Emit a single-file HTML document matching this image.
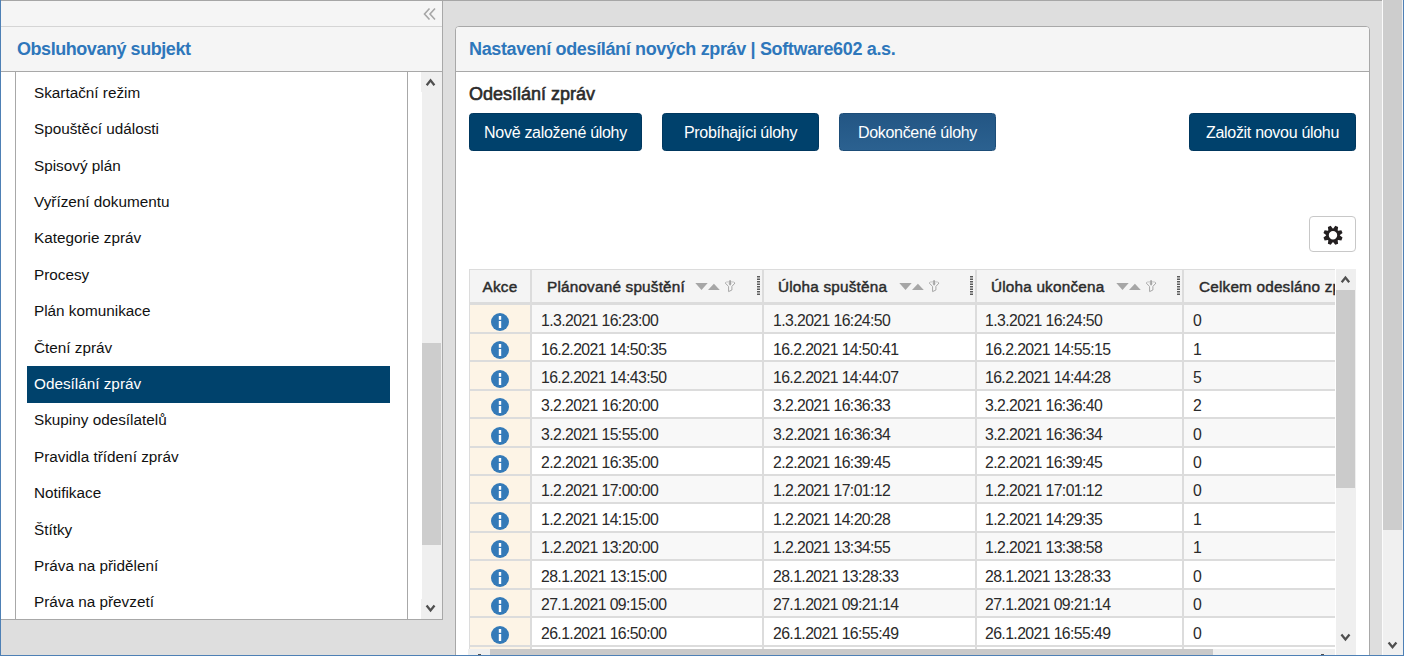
<!DOCTYPE html>
<html><head><meta charset="utf-8">
<style>
*{margin:0;padding:0;box-sizing:border-box}
html,body{width:1404px;height:656px;overflow:hidden;background:#dedede;font-family:"Liberation Sans",sans-serif;color:#222}
.a{position:absolute}
.t{position:absolute;white-space:nowrap}
/* frame */
#fl{left:0;top:0;width:1px;height:656px;background:#4e80b5}
#fr{left:1403px;top:0;width:1px;height:656px;background:#4e80b5}
#fb{left:0;top:655px;width:1404px;height:1px;background:#4e80b5}
#ftop{left:1px;top:0;width:1381px;height:1px;background:#a6a6a6}
/* page scrollbar */
#psw{left:1382px;top:0;width:1px;height:655px;background:#fbfbfb}
#pst{left:1383px;top:0;width:20px;height:655px;background:#f0f0f0}
#psth{left:1383px;top:0;width:19px;height:530px;background:#cdcdcd}
/* left panel */
#lp{left:1px;top:1px;width:442px;height:619px;background:#f5f5f5;border-right:1px solid #a8a8a8;border-bottom:1px solid #a8a8a8}
#lpl1{left:1px;top:26px;width:441px;height:1px;background:#d5d5d5}
#lpl2{left:1px;top:71px;width:441px;height:1px;background:#a8a8a8}
#lplist{left:1px;top:72px;width:441px;height:547px;background:#fff}
#lpb1{left:15px;top:72px;width:1px;height:547px;background:#a8a8a8}
#lpb2{left:407px;top:72px;width:1px;height:547px;background:#a8a8a8}
#lsb{left:422px;top:72px;width:20px;height:547px;background:#efefef}
#lsbth{left:422px;top:343px;width:19px;height:202px;background:#cdcdcd}
.li{position:absolute;left:27px;width:363px;height:36.4px;line-height:36.4px;font-size:15.3px;padding-left:7px;color:#111;white-space:nowrap}
.li.sel{background:#00426c;color:#fff;height:37px}
.h17{font-size:18px;font-weight:bold;color:#2e77bb;letter-spacing:-0.45px}
/* right panel */
#rp{left:455px;top:26px;width:915px;height:640px;background:#fff;border:1px solid #a8a8a8;border-radius:4px 4px 0 0}
#rph{left:456px;top:27px;width:913px;height:44px;background:#f5f5f5;border-radius:3px 3px 0 0}
#rpl{left:456px;top:71px;width:913px;height:1px;background:#a8a8a8}
.btn{position:absolute;top:113px;height:38px;border-radius:3.5px;background:#00416c;border:1px solid #00375e;color:#fff;font-size:16px;letter-spacing:-0.3px;line-height:37px;text-align:center;white-space:nowrap}
.btn.act{background:linear-gradient(#235684,#2b6190);border-color:#1d4d78}
.td{font-size:15.8px;letter-spacing:-0.6px;line-height:20px;color:#2a2a2a}
.th{font-size:15.3px;letter-spacing:0.2px;font-weight:normal;-webkit-text-stroke:0.45px #2b2b2b;line-height:20px;color:#2b2b2b}
</style></head><body>

<div class="a" id="psw"></div><div class="a" id="pst"></div><div class="a" id="psth"></div>
<svg class="a" style="left:1385px;top:639px" width="14" height="12" viewBox="0 0 14 12"><path d="M3.60 3.50 L7.50 8.30 L11.40 3.50" fill="none" stroke="#4f4f4f" stroke-width="2.3"/></svg>

<!-- LEFT PANEL -->
<div class="a" id="lp"></div>
<div class="a" id="lpl1"></div>
<div class="a" id="lpl2"></div>
<div class="a" id="lplist"></div>
<div class="a" id="lpb1"></div>
<div class="a" id="lpb2"></div>
<div class="a" id="lsb"></div>
<div class="a" id="lsbth"></div>
<div class="a" style="left:421px;top:72px;width:1px;height:20px;background:#efefef"></div><div class="a" style="left:421px;top:599px;width:1px;height:20px;background:#efefef"></div>
<svg class="a" style="left:423px;top:7px" width="14" height="14" viewBox="0 0 14 14"><path d="M6.5 1.5 L1.5 7 L6.5 12.5 M12 1.5 L7 7 L12 12.5" fill="none" stroke="#a6a6a6" stroke-width="1.6"/></svg>
<svg class="a" style="left:423px;top:76px" width="14" height="12" viewBox="0 0 14 12"><path d="M3.70 9.20 L7.55 4.40 L11.40 9.20" fill="none" stroke="#4f4f4f" stroke-width="2.3"/></svg>
<svg class="a" style="left:423px;top:602px" width="14" height="12" viewBox="0 0 14 12"><path d="M3.60 3.50 L7.55 8.50 L11.50 3.50" fill="none" stroke="#4f4f4f" stroke-width="2.3"/></svg>
<div class="t h17" style="left:17px;top:39px;line-height:20px">Obsluhovaný subjekt</div>
<div class="li" style="top:74.8px">Skartační režim</div>
<div class="li" style="top:111.2px">Spouštěcí události</div>
<div class="li" style="top:147.6px">Spisový plán</div>
<div class="li" style="top:184px">Vyřízení dokumentu</div>
<div class="li" style="top:220.4px">Kategorie zpráv</div>
<div class="li" style="top:256.8px">Procesy</div>
<div class="li" style="top:293.2px">Plán komunikace</div>
<div class="li" style="top:329.6px">Čtení zpráv</div>
<div class="li sel" style="top:366px">Odesílání zpráv</div>
<div class="li" style="top:402.4px">Skupiny odesílatelů</div>
<div class="li" style="top:438.8px">Pravidla třídení zpráv</div>
<div class="li" style="top:475.2px">Notifikace</div>
<div class="li" style="top:511.6px">Štítky</div>
<div class="li" style="top:548px">Práva na přidělení</div>
<div class="li" style="top:584.4px">Práva na převzetí</div>

<!-- RIGHT PANEL -->
<div class="a" id="rp"></div>
<div class="a" id="rph"></div>
<div class="a" id="rpl"></div>
<div class="t h17" style="left:469px;top:39px;line-height:20px;letter-spacing:-0.35px">Nastavení odesílání nových zpráv | Software602 a.s.</div>
<div class="t" style="left:469px;top:84px;line-height:20px;font-size:18px;letter-spacing:0px;font-weight:normal;-webkit-text-stroke:0.6px #2b2b2b;color:#2b2b2b">Odesílání zpráv</div>
<div class="btn" style="left:469px;width:173px">Nově založené úlohy</div>
<div class="btn" style="left:662px;width:157px">Probíhajíci úlohy</div>
<div class="btn act" style="left:839px;width:157px">Dokončené úlohy</div>
<div class="btn" style="left:1189px;width:167px">Založit novou úlohu</div>
<div class="a" style="left:469px;top:269px;width:866px;height:380px;background:#fff"></div>
<div class="a" style="left:469px;top:269px;width:866px;height:1px;background:#dcdcdc"></div>
<div class="a" style="left:470px;top:270px;width:865px;height:32px;background:#f4f4f4"></div>
<div class="a" style="left:469px;top:302px;width:866px;height:3px;background:#dcdcdc"></div>
<div class="a" style="left:532px;top:305px;width:803px;height:27px;background:#f8f8f8"></div>
<div class="a" style="left:470px;top:305px;width:60px;height:27px;background:#fdf4e6"></div>
<div class="a" style="left:469px;top:332px;width:866px;height:2px;background:#dcdcdc"></div>
<div class="a" style="left:532px;top:334px;width:803px;height:26px;background:#fff"></div>
<div class="a" style="left:470px;top:334px;width:60px;height:26px;background:#fdf4e6"></div>
<div class="a" style="left:469px;top:360px;width:866px;height:2px;background:#dcdcdc"></div>
<div class="a" style="left:532px;top:362px;width:803px;height:27px;background:#f8f8f8"></div>
<div class="a" style="left:470px;top:362px;width:60px;height:27px;background:#fdf4e6"></div>
<div class="a" style="left:469px;top:389px;width:866px;height:2px;background:#dcdcdc"></div>
<div class="a" style="left:532px;top:391px;width:803px;height:26px;background:#fff"></div>
<div class="a" style="left:470px;top:391px;width:60px;height:26px;background:#fdf4e6"></div>
<div class="a" style="left:469px;top:417px;width:866px;height:2px;background:#dcdcdc"></div>
<div class="a" style="left:532px;top:419px;width:803px;height:27px;background:#f8f8f8"></div>
<div class="a" style="left:470px;top:419px;width:60px;height:27px;background:#fdf4e6"></div>
<div class="a" style="left:469px;top:446px;width:866px;height:2px;background:#dcdcdc"></div>
<div class="a" style="left:532px;top:448px;width:803px;height:26px;background:#fff"></div>
<div class="a" style="left:470px;top:448px;width:60px;height:26px;background:#fdf4e6"></div>
<div class="a" style="left:469px;top:474px;width:866px;height:2px;background:#dcdcdc"></div>
<div class="a" style="left:532px;top:476px;width:803px;height:26px;background:#f8f8f8"></div>
<div class="a" style="left:470px;top:476px;width:60px;height:26px;background:#fdf4e6"></div>
<div class="a" style="left:469px;top:502px;width:866px;height:2px;background:#dcdcdc"></div>
<div class="a" style="left:532px;top:504px;width:803px;height:27px;background:#fff"></div>
<div class="a" style="left:470px;top:504px;width:60px;height:27px;background:#fdf4e6"></div>
<div class="a" style="left:469px;top:531px;width:866px;height:2px;background:#dcdcdc"></div>
<div class="a" style="left:532px;top:533px;width:803px;height:26px;background:#f8f8f8"></div>
<div class="a" style="left:470px;top:533px;width:60px;height:26px;background:#fdf4e6"></div>
<div class="a" style="left:469px;top:559px;width:866px;height:2px;background:#dcdcdc"></div>
<div class="a" style="left:532px;top:561px;width:803px;height:27px;background:#fff"></div>
<div class="a" style="left:470px;top:561px;width:60px;height:27px;background:#fdf4e6"></div>
<div class="a" style="left:469px;top:588px;width:866px;height:2px;background:#dcdcdc"></div>
<div class="a" style="left:532px;top:590px;width:803px;height:26px;background:#f8f8f8"></div>
<div class="a" style="left:470px;top:590px;width:60px;height:26px;background:#fdf4e6"></div>
<div class="a" style="left:469px;top:616px;width:866px;height:2px;background:#dcdcdc"></div>
<div class="a" style="left:532px;top:618px;width:803px;height:27px;background:#fff"></div>
<div class="a" style="left:470px;top:618px;width:60px;height:27px;background:#fdf4e6"></div>
<div class="a" style="left:469px;top:645px;width:866px;height:2px;background:#dcdcdc"></div>
<div class="a" style="left:532px;top:647px;width:803px;height:2px;background:#fff"></div>
<div class="a" style="left:470px;top:647px;width:60px;height:2px;background:#fdf4e6"></div>
<div class="a" style="left:469px;top:269px;width:1px;height:380px;background:#dcdcdc"></div>
<div class="a" style="left:530px;top:270px;width:2px;height:379px;background:#dcdcdc"></div>
<div class="a" style="left:762px;top:270px;width:2px;height:379px;background:#dcdcdc"></div>
<div class="a" style="left:975px;top:270px;width:2px;height:379px;background:#dcdcdc"></div>
<div class="a" style="left:1182px;top:270px;width:2px;height:379px;background:#dcdcdc"></div>
<svg class="a" style="left:491px;top:313px" width="18" height="18" viewBox="0 0 18 18"><circle cx="9" cy="9" r="9" fill="#347ab8"/><rect x="7.8" y="3" width="2.4" height="3.8" fill="#fff"/><rect x="7.8" y="8" width="2.4" height="7" fill="#fff"/></svg>
<div class="t td" style="left:541px;top:311px">1.3.2021 16:23:00</div>
<div class="t td" style="left:773px;top:311px">1.3.2021 16:24:50</div>
<div class="t td" style="left:985px;top:311px">1.3.2021 16:24:50</div>
<div class="t td" style="left:1193px;top:311px">0</div>
<svg class="a" style="left:491px;top:341px" width="18" height="18" viewBox="0 0 18 18"><circle cx="9" cy="9" r="9" fill="#347ab8"/><rect x="7.8" y="3" width="2.4" height="3.8" fill="#fff"/><rect x="7.8" y="8" width="2.4" height="7" fill="#fff"/></svg>
<div class="t td" style="left:541px;top:340px">16.2.2021 14:50:35</div>
<div class="t td" style="left:773px;top:340px">16.2.2021 14:50:41</div>
<div class="t td" style="left:985px;top:340px">16.2.2021 14:55:15</div>
<div class="t td" style="left:1193px;top:340px">1</div>
<svg class="a" style="left:491px;top:370px" width="18" height="18" viewBox="0 0 18 18"><circle cx="9" cy="9" r="9" fill="#347ab8"/><rect x="7.8" y="3" width="2.4" height="3.8" fill="#fff"/><rect x="7.8" y="8" width="2.4" height="7" fill="#fff"/></svg>
<div class="t td" style="left:541px;top:368px">16.2.2021 14:43:50</div>
<div class="t td" style="left:773px;top:368px">16.2.2021 14:44:07</div>
<div class="t td" style="left:985px;top:368px">16.2.2021 14:44:28</div>
<div class="t td" style="left:1193px;top:368px">5</div>
<svg class="a" style="left:491px;top:398px" width="18" height="18" viewBox="0 0 18 18"><circle cx="9" cy="9" r="9" fill="#347ab8"/><rect x="7.8" y="3" width="2.4" height="3.8" fill="#fff"/><rect x="7.8" y="8" width="2.4" height="7" fill="#fff"/></svg>
<div class="t td" style="left:541px;top:396px">3.2.2021 16:20:00</div>
<div class="t td" style="left:773px;top:396px">3.2.2021 16:36:33</div>
<div class="t td" style="left:985px;top:396px">3.2.2021 16:36:40</div>
<div class="t td" style="left:1193px;top:396px">2</div>
<svg class="a" style="left:491px;top:427px" width="18" height="18" viewBox="0 0 18 18"><circle cx="9" cy="9" r="9" fill="#347ab8"/><rect x="7.8" y="3" width="2.4" height="3.8" fill="#fff"/><rect x="7.8" y="8" width="2.4" height="7" fill="#fff"/></svg>
<div class="t td" style="left:541px;top:425px">3.2.2021 15:55:00</div>
<div class="t td" style="left:773px;top:425px">3.2.2021 16:36:34</div>
<div class="t td" style="left:985px;top:425px">3.2.2021 16:36:34</div>
<div class="t td" style="left:1193px;top:425px">0</div>
<svg class="a" style="left:491px;top:455px" width="18" height="18" viewBox="0 0 18 18"><circle cx="9" cy="9" r="9" fill="#347ab8"/><rect x="7.8" y="3" width="2.4" height="3.8" fill="#fff"/><rect x="7.8" y="8" width="2.4" height="7" fill="#fff"/></svg>
<div class="t td" style="left:541px;top:453px">2.2.2021 16:35:00</div>
<div class="t td" style="left:773px;top:453px">2.2.2021 16:39:45</div>
<div class="t td" style="left:985px;top:453px">2.2.2021 16:39:45</div>
<div class="t td" style="left:1193px;top:453px">0</div>
<svg class="a" style="left:491px;top:483px" width="18" height="18" viewBox="0 0 18 18"><circle cx="9" cy="9" r="9" fill="#347ab8"/><rect x="7.8" y="3" width="2.4" height="3.8" fill="#fff"/><rect x="7.8" y="8" width="2.4" height="7" fill="#fff"/></svg>
<div class="t td" style="left:541px;top:481px">1.2.2021 17:00:00</div>
<div class="t td" style="left:773px;top:481px">1.2.2021 17:01:12</div>
<div class="t td" style="left:985px;top:481px">1.2.2021 17:01:12</div>
<div class="t td" style="left:1193px;top:481px">0</div>
<svg class="a" style="left:491px;top:512px" width="18" height="18" viewBox="0 0 18 18"><circle cx="9" cy="9" r="9" fill="#347ab8"/><rect x="7.8" y="3" width="2.4" height="3.8" fill="#fff"/><rect x="7.8" y="8" width="2.4" height="7" fill="#fff"/></svg>
<div class="t td" style="left:541px;top:510px">1.2.2021 14:15:00</div>
<div class="t td" style="left:773px;top:510px">1.2.2021 14:20:28</div>
<div class="t td" style="left:985px;top:510px">1.2.2021 14:29:35</div>
<div class="t td" style="left:1193px;top:510px">1</div>
<svg class="a" style="left:491px;top:540px" width="18" height="18" viewBox="0 0 18 18"><circle cx="9" cy="9" r="9" fill="#347ab8"/><rect x="7.8" y="3" width="2.4" height="3.8" fill="#fff"/><rect x="7.8" y="8" width="2.4" height="7" fill="#fff"/></svg>
<div class="t td" style="left:541px;top:538px">1.2.2021 13:20:00</div>
<div class="t td" style="left:773px;top:538px">1.2.2021 13:34:55</div>
<div class="t td" style="left:985px;top:538px">1.2.2021 13:38:58</div>
<div class="t td" style="left:1193px;top:538px">1</div>
<svg class="a" style="left:491px;top:569px" width="18" height="18" viewBox="0 0 18 18"><circle cx="9" cy="9" r="9" fill="#347ab8"/><rect x="7.8" y="3" width="2.4" height="3.8" fill="#fff"/><rect x="7.8" y="8" width="2.4" height="7" fill="#fff"/></svg>
<div class="t td" style="left:541px;top:567px">28.1.2021 13:15:00</div>
<div class="t td" style="left:773px;top:567px">28.1.2021 13:28:33</div>
<div class="t td" style="left:985px;top:567px">28.1.2021 13:28:33</div>
<div class="t td" style="left:1193px;top:567px">0</div>
<svg class="a" style="left:491px;top:597px" width="18" height="18" viewBox="0 0 18 18"><circle cx="9" cy="9" r="9" fill="#347ab8"/><rect x="7.8" y="3" width="2.4" height="3.8" fill="#fff"/><rect x="7.8" y="8" width="2.4" height="7" fill="#fff"/></svg>
<div class="t td" style="left:541px;top:595px">27.1.2021 09:15:00</div>
<div class="t td" style="left:773px;top:595px">27.1.2021 09:21:14</div>
<div class="t td" style="left:985px;top:595px">27.1.2021 09:21:14</div>
<div class="t td" style="left:1193px;top:595px">0</div>
<svg class="a" style="left:491px;top:626px" width="18" height="18" viewBox="0 0 18 18"><circle cx="9" cy="9" r="9" fill="#347ab8"/><rect x="7.8" y="3" width="2.4" height="3.8" fill="#fff"/><rect x="7.8" y="8" width="2.4" height="7" fill="#fff"/></svg>
<div class="t td" style="left:541px;top:624px">26.1.2021 16:50:00</div>
<div class="t td" style="left:773px;top:624px">26.1.2021 16:55:49</div>
<div class="t td" style="left:985px;top:624px">26.1.2021 16:55:49</div>
<div class="t td" style="left:1193px;top:624px">0</div>

<div class="t th" style="left:470px;width:60px;text-align:center;top:277px">Akce</div>
<div class="t th" style="left:547px;top:277px">Plánované spuštění</div>
<svg class="a" style="left:695px;top:282px" width="25" height="9" viewBox="0 0 25 9"><path d="M0.3 1 L12.7 1 L6.5 7.9Z M13 7.9 L24.8 7.9 L18.9 1.7Z" fill="#a6a6a6"/></svg>
<svg class="a" style="left:724px;top:280px" width="12" height="13" viewBox="0 0 12 13"><ellipse cx="6.1" cy="2.9" rx="4.9" ry="1.1" fill="#f7f7f7" stroke="#b4b4b4" stroke-width="0.8"/><path d="M1.2 3 L4.6 6.4 L4.6 11.6 L7.9 10 L7.9 6.4 L11 3" fill="#f7f7f7" stroke="#a6a6a6" stroke-width="1" stroke-linejoin="round"/><path d="M6.1 0.2 L6.1 4" stroke="#a6a6a6" stroke-width="1.8"/><path d="M4.4 3.6 L6.1 5.7 L7.8 3.6Z" fill="#a6a6a6"/></svg>
<svg class="a" style="left:757px;top:276px" width="3" height="20" viewBox="0 0 3 20"><path d="M1.5 0 L1.5 20" stroke="#5a5a5a" stroke-width="3" stroke-dasharray="1.4 1.1"/></svg>
<div class="t th" style="left:778px;top:277px">Úloha spuštěna</div>
<svg class="a" style="left:899px;top:282px" width="25" height="9" viewBox="0 0 25 9"><path d="M0.3 1 L12.7 1 L6.5 7.9Z M13 7.9 L24.8 7.9 L18.9 1.7Z" fill="#a6a6a6"/></svg>
<svg class="a" style="left:928px;top:280px" width="12" height="13" viewBox="0 0 12 13"><ellipse cx="6.1" cy="2.9" rx="4.9" ry="1.1" fill="#f7f7f7" stroke="#b4b4b4" stroke-width="0.8"/><path d="M1.2 3 L4.6 6.4 L4.6 11.6 L7.9 10 L7.9 6.4 L11 3" fill="#f7f7f7" stroke="#a6a6a6" stroke-width="1" stroke-linejoin="round"/><path d="M6.1 0.2 L6.1 4" stroke="#a6a6a6" stroke-width="1.8"/><path d="M4.4 3.6 L6.1 5.7 L7.8 3.6Z" fill="#a6a6a6"/></svg>
<svg class="a" style="left:970px;top:276px" width="3" height="20" viewBox="0 0 3 20"><path d="M1.5 0 L1.5 20" stroke="#5a5a5a" stroke-width="3" stroke-dasharray="1.4 1.1"/></svg>
<div class="t th" style="left:991px;top:277px">Úloha ukončena</div>
<svg class="a" style="left:1116px;top:282px" width="25" height="9" viewBox="0 0 25 9"><path d="M0.3 1 L12.7 1 L6.5 7.9Z M13 7.9 L24.8 7.9 L18.9 1.7Z" fill="#a6a6a6"/></svg>
<svg class="a" style="left:1145px;top:280px" width="12" height="13" viewBox="0 0 12 13"><ellipse cx="6.1" cy="2.9" rx="4.9" ry="1.1" fill="#f7f7f7" stroke="#b4b4b4" stroke-width="0.8"/><path d="M1.2 3 L4.6 6.4 L4.6 11.6 L7.9 10 L7.9 6.4 L11 3" fill="#f7f7f7" stroke="#a6a6a6" stroke-width="1" stroke-linejoin="round"/><path d="M6.1 0.2 L6.1 4" stroke="#a6a6a6" stroke-width="1.8"/><path d="M4.4 3.6 L6.1 5.7 L7.8 3.6Z" fill="#a6a6a6"/></svg>
<svg class="a" style="left:1177px;top:276px" width="3" height="20" viewBox="0 0 3 20"><path d="M1.5 0 L1.5 20" stroke="#5a5a5a" stroke-width="3" stroke-dasharray="1.4 1.1"/></svg>
<div class="t th" style="left:1199px;top:277px;width:136px;overflow:hidden">Celkem odesláno zpráv</div>

<div class="a" style="left:1336px;top:269px;width:20px;height:387px;background:#efefef"></div>
<div class="a" style="left:1336px;top:290px;width:19px;height:198px;background:#cbcbcb"></div>
<svg class="a" style="left:1338px;top:274px" width="14" height="12" viewBox="0 0 14 12"><path d="M3.70 8.20 L7.45 3.50 L11.20 8.20" fill="none" stroke="#4f4f4f" stroke-width="2.3"/></svg>
<svg class="a" style="left:1338px;top:631px" width="14" height="12" viewBox="0 0 14 12"><path d="M3.40 3.60 L7.45 8.40 L11.50 3.60" fill="none" stroke="#4f4f4f" stroke-width="2.3"/></svg>
<div class="a" style="left:468px;top:649px;width:867px;height:6px;background:#efefef"></div>
<div class="a" style="left:490px;top:649px;width:723px;height:6px;background:#c9c9c9"></div>
<div class="a" style="left:478px;top:654px;width:3px;height:1px;background:#4f4f4f"></div>
<div class="a" style="left:1321px;top:654px;width:3px;height:1px;background:#4f4f4f"></div>
<div class="a" style="left:1309px;top:216px;width:47px;height:36px;background:#fff;border:1px solid #c8c8c8;border-radius:4px"></div>
<svg class="a" style="left:1323px;top:225px" width="20" height="21" viewBox="0 0 20 21"><path d="M10.30 3.41 L12.29 0.77 L15.12 1.94 L14.66 5.21 L15.09 5.64 L18.36 5.18 L19.53 8.01 L16.89 10.00 L16.89 10.60 L19.53 12.59 L18.36 15.42 L15.09 14.96 L14.66 15.39 L15.12 18.66 L12.29 19.83 L10.30 17.19 L9.70 17.19 L7.71 19.83 L4.88 18.66 L5.34 15.39 L4.91 14.96 L1.64 15.42 L0.47 12.59 L3.11 10.60 L3.11 10.00 L0.47 8.01 L1.64 5.18 L4.91 5.64 L5.34 5.21 L4.88 1.94 L7.71 0.77 L9.70 3.41Z M10 6.10 A4.2 4.2 0 1 0 10 14.50 A4.2 4.2 0 1 0 10 6.10Z" fill="#231f20" fill-rule="evenodd"/></svg>

<div class="a" id="fl"></div><div class="a" id="fr"></div><div class="a" id="fb"></div><div class="a" id="ftop"></div>
</body></html>
